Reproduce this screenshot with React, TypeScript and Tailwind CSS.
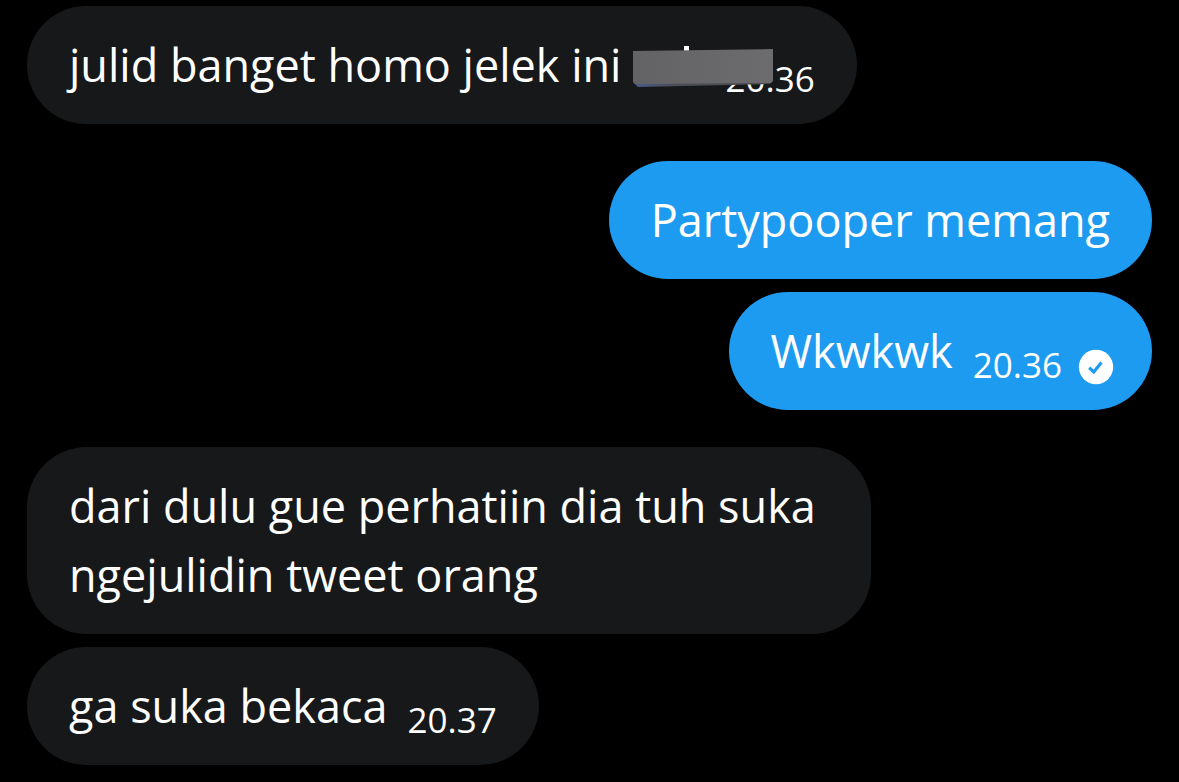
import type { ReactNode } from "react";
import clsx from "clsx";

type Message = {
  id: number;
  mine?: boolean;
  text: string;
  time?: string;
  hiddenName?: boolean;
  sent?: boolean;
};

const groups: Message[][] = [
  [
    {
      id: 1,
      text: "julid banget homo jelek ini",
      time: "20.36",
      hiddenName: true,
    },
  ],
  [
    { id: 2, mine: true, text: "Partypooper memang" },
    { id: 3, mine: true, text: "Wkwkwk", time: "20.36", sent: true },
  ],
  [
    { id: 4, text: "dari dulu gue perhatiin dia tuh suka ngejulidin tweet orang" },
    { id: 5, text: "ga suka bekaca", time: "20.37" },
  ],
];

const SentIcon = () => (
  <svg viewBox="0 0 36 36" className="-mr-1 ml-4 size-9 shrink-0">
    <circle cx="18" cy="18" r="17.2" fill="#fff" />
    <path
      d="M11.2 18.8l4.6 4.2 7.6-9.4"
      fill="none"
      stroke="#1d9bf0"
      strokeWidth="3.2"
    />
  </svg>
);

// Grey marker drawn over the name, it also covers part of the time
const Marker = () => (
  <svg
    viewBox="0 0 140 44"
    className="relative z-10 -mr-12 mb-[11px] ml-3 h-11 w-[140px] shrink-0"
  >
    <defs>
      <linearGradient id="edge" x1="0" x2="1" y1="0" y2="0">
        <stop offset="0" stopColor="#4a5c8c" />
        <stop offset="0.3" stopColor="#4c4d54" />
        <stop offset="1" stopColor="#4a4a4c" />
      </linearGradient>
      <linearGradient id="fill" x1="0" x2="1" y1="0" y2="0">
        <stop offset="0" stopColor="#636365" />
        <stop offset="1" stopColor="#6c6c6e" />
      </linearGradient>
    </defs>
    <rect x="51" y="2" width="5" height="6" fill="#fff" />
    <path d="M0 38l140-3-3 5-132 3z" fill="url(#edge)" />
    <path d="M0 7l140-2v32l-2 2-136 1-2-2z" fill="url(#fill)" />
  </svg>
);

const Bubble = ({ mine, children }: { mine?: boolean; children: ReactNode }) => (
  <div
    className={clsx(
      "flex w-fit max-w-3/4 items-end rounded-[60px] px-[42px] pt-6 pb-[25px]",
      mine ? "self-end bg-[#1d9bf0]" : "self-start bg-[#16181a]"
    )}
  >
    {children}
  </div>
);

export default function App() {
  return (
    <main className="flex min-h-screen flex-col gap-[37px] bg-black px-[27px] pt-[6px] pb-4 font-['Open_Sans',sans-serif] text-white">
      {groups.map((group) => (
        <section key={group[0].id} className="flex flex-col gap-[13px]">
          {group.map((message) => (
            <Bubble key={message.id} mine={message.mine}>
              <p className="text-[45px] leading-[69px]">{message.text}</p>
              {message.hiddenName && <Marker />}
              {message.time && (
                <time
                  className={clsx(
                    "text-[35px] leading-10",
                    !message.hiddenName && "ml-5"
                  )}
                >
                  {message.time}
                </time>
              )}
              {message.sent && <SentIcon />}
            </Bubble>
          ))}
        </section>
      ))}
    </main>
  );
}
